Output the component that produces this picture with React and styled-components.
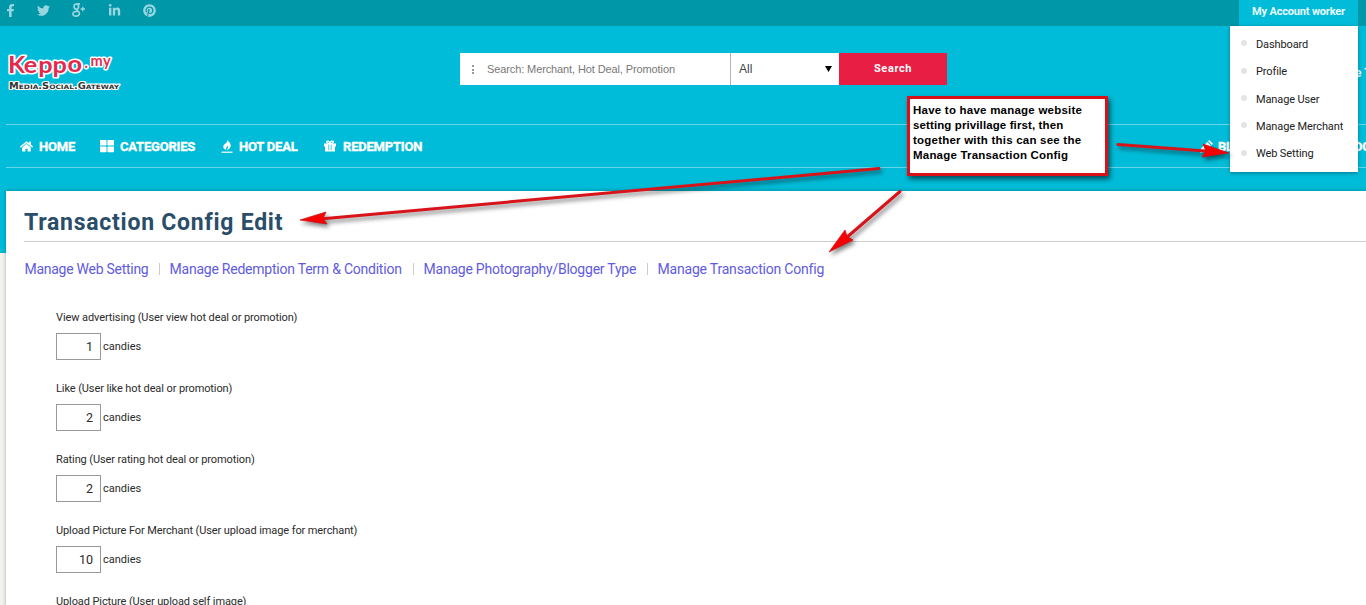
import React from 'react';
import styled, { createGlobalStyle } from 'styled-components';
import { FaFacebookF, FaTwitter, FaLinkedinIn, FaPinterest, FaHome, FaThLarge } from 'react-icons/fa';

const GlobalStyle = createGlobalStyle`
  *, *::before, *::after { box-sizing: border-box; }
  body { margin: 0; background: #f4f4ef; overflow: hidden; font-family: Roboto, "Liberation Sans", sans-serif; }
`;

const Page = styled.div`
  position: relative;
  width: 1366px;
  height: 605px;
  overflow: hidden;
  background: linear-gradient(#00bcd8 253px, #f4f4ef 253px);
`;

const TopBar = styled.div`
  height: 26px;
  background: #0097a9;
  display: flex;
  justify-content: space-between;
  padding-right: 8px;
`;

const SocialLinks = styled.div`
  display: flex;
  align-items: center;
  height: 20px;
  padding-left: 5px;
`;

const SocialLink = styled.span`
  display: flex;
  justify-content: center;
  width: ${(p) => p.$width}px;
  margin-right: ${(p) => p.$gap}px;
  color: #98d7e0;
  font-size: 13px;
`;

const Account = styled.div`
  position: relative;
  width: 119px;
  height: 26px;
  background: #00bcd8;
  color: #e9fbfd;
  font-size: 11px;
  font-weight: 700;
  line-height: 23px;
  letter-spacing: -0.17px;
  text-align: center;
  white-space: nowrap;
`;

const Dropdown = styled.ul`
  position: absolute;
  top: 26px;
  right: 0;
  z-index: 2;
  width: 128px;
  height: 146px;
  margin: 0;
  padding: 4.8px 0 0 11px;
  list-style: none;
  background: #fff;
  box-shadow: 0 1px 4px rgba(0, 0, 0, 0.35);
`;

const DropdownItem = styled.li`
  display: flex;
  align-items: center;
  height: 27.3px;
  color: #222;
  font-size: 11px;
  font-weight: 400;
  letter-spacing: -0.12px;
  text-align: left;
  &::before {
    content: '';
    width: 6px;
    height: 6px;
    margin: -2px 9px 0 0;
    border-radius: 50%;
    background: #e4e4e4;
  }
`;

const Header = styled.header`
  display: flex;
  align-items: flex-start;
  height: 98px;
  padding-left: 6px;
  > * { flex: none; }
`;

const LogoBox = styled.div`
  width: 454px;
  padding-top: 26px;
  svg { display: block; }
`;

const SearchForm = styled.div`
  display: flex;
  width: 487px;
  height: 32px;
  margin-top: 27px;
  background: #fff;
  font-family: "Liberation Sans", sans-serif;
`;

const SearchField = styled.div`
  display: flex;
  align-items: center;
  width: 271px;
  padding-left: 12px;
  border-right: 1px solid #b5b5b5;
  color: #777;
  font-size: 11px;
  letter-spacing: -0.11px;
`;

const Dots = styled.i`
  width: 2px;
  height: 9px;
  margin-right: 13px;
  background: repeating-linear-gradient(#999 0 2px, #fff 2px 3.5px);
`;

const SearchSelect = styled.div`
  display: flex;
  align-items: center;
  justify-content: space-between;
  width: 108px;
  padding: 0 7px 0 8px;
  color: #444;
  font-size: 12px;
`;

const SearchButton = styled.div`
  width: 108px;
  background: #e91e44;
  color: #fff;
  font: 700 11px/31px Roboto, sans-serif;
  letter-spacing: 0.6px;
  text-align: center;
`;

const HeaderTail = styled.div`
  margin: 40px 0 0 408px;
  color: #e9fbfd;
  font-size: 12px;
  font-weight: 700;
  white-space: nowrap;
`;

const Nav = styled.nav`
  display: flex;
  align-items: center;
  height: 44px;
  margin-left: 6px;
  padding-left: 14px;
  border-top: 1px solid #66d7e8;
  border-bottom: 1px solid #66d7e8;
`;

const NavItem = styled.div`
  display: flex;
  align-items: center;
  width: ${(p) => p.$width}px;
  flex: none;
  color: #fff;
  font-size: 13px;
  font-weight: 700;
  letter-spacing: -0.2px;
  -webkit-text-stroke: 0.35px #fff;
  white-space: nowrap;
  svg { flex: none; margin-right: ${(p) => p.$gap}px; }
`;

const Panel = styled.main`
  height: 460px;
  margin: 23px 0 0 6px;
  padding: 13px 0 0 18px;
  background: #fff;
  box-shadow: 0 0 4px rgba(0, 0, 0, 0.3);
`;

const Title = styled.h1`
  height: 38px;
  margin: 0;
  border-bottom: 1px solid #ccc;
  color: #2a4d69;
  font-size: 23px;
  font-weight: 700;
  line-height: 38px;
  letter-spacing: 0.75px;
`;

const Tabs = styled.div`
  display: flex;
  align-items: center;
  height: 54px;
  padding: 0 0 1px 0.5px;
  color: #5f5bdf;
  font-size: 14px;
  white-space: nowrap;
`;

const Tab = styled.span`
  width: ${(p) => p.$width}px;
  letter-spacing: ${(p) => p.$spacing}px;
`;

const Separator = styled.i`
  width: 1px;
  height: 12px;
  margin: 0 10px;
  background: #ccc;
`;

const Fields = styled.div`
  padding: 12px 0 0 32px;
`;

const Field = styled.div`
  height: 71px;
  color: #2b2b2b;
  font-size: 11px;
`;

const Label = styled.div`
  height: 25px;
  line-height: 20px;
  letter-spacing: -0.1px;
`;

const InputRow = styled.div`
  display: flex;
  align-items: center;
  gap: 2px;
`;

const NumberBox = styled.div`
  width: 45px;
  height: 27px;
  padding-right: 7px;
  border: 1px solid #999;
  font-size: 12.5px;
  line-height: 26px;
  text-align: right;
`;

const Note = styled.div`
  position: absolute;
  left: 907px;
  top: 96px;
  z-index: 3;
  width: 201px;
  height: 80px;
  padding: 4px 0 0 3px;
  border: 3px solid #dc1018;
  background: #fff;
  box-shadow: 2px 3px 5px rgba(0, 0, 0, 0.6);
  color: #000;
  font: 700 11.5px/15px "Liberation Sans", sans-serif;
  white-space: nowrap;
`;

const NoteLine = styled.div`
  letter-spacing: ${(p) => p.$spacing}px;
`;

const Arrows = styled.svg`
  position: absolute;
  inset: 0;
  z-index: 3;
  pointer-events: none;
  filter: drop-shadow(2px 3px 2px rgba(0, 0, 0, 0.5));
`;

const Logo = () => (
  <svg width="120" height="44" viewBox="0 0 120 44">
    <g fontFamily="Lato, sans-serif" fontWeight="700" fill="#e5294d" stroke="#fff" strokeWidth="3.2" paintOrder="stroke" strokeLinejoin="round">
      <text x="78.500 84.500 97" y="16 14 14" fontSize="14.500" strokeWidth="3">.my</text>
      <text transform="scale(1.15 1)" x="1.800 15.500 28 40.500 53.500" y="21 20.500 20.500 20.500 20" fontSize="22">Keppo</text>
    </g>
    <text x="3" y="37" fontFamily="DejaVu Sans, sans-serif" fontWeight="700" fontSize="8" fontVariant="small-caps" fill="#333" stroke="#fff" strokeWidth="2.2" paintOrder="stroke" strokeLinejoin="round" textLength="110" lengthAdjust="spacingAndGlyphs">Media.Social.Gateway</text>
  </svg>
);

const GooglePlus = () => (
  <svg width="14" height="14" viewBox="0 0 14 14" fill="none" stroke="currentColor" strokeWidth="1.6">
    <ellipse cx="4.3" cy="3.6" rx="2.3" ry="2.6" />
    <path d="M4.6 .9H8M5.700 5.800C4 7.200 5 7.400 6.200 8.400 8.600 10.600 7 13.100 4.100 13.100 1.600 13.100.800 11.900.900 10.600 1.100 8.800 3.200 8.200 5.500 8.200" />
    <path d="M10.800 3.800v4.400M8.600 6h4.400" strokeWidth="1.300" />
  </svg>
);

const Flame = () => (
  <svg width="12" height="13" viewBox="0 0 12 13" fill="#fff">
    <path d="M6.300 0C7.200 1.500 9.900 2.900 9.700 5.700 9.500 7.900 7.900 9.400 5.900 10 7 8.400 7.400 7 6.800 5.500 6.500 6.800 5.300 7.300 5.100 8.300 5 8.900 5.100 9.300 5.300 10 3.200 9.300 2.100 7.900 2.300 6.300 2.600 4 6.800 3 6.300 0Z" />
    <path d="M.5 11.600h11v1.200H.5z" />
  </svg>
);

const Gift = () => (
  <svg width="12" height="12" viewBox="0 0 12 12">
    <path d="M0 3.500h12v3H0zM1 6.500h10v5H1z" fill="#fff" />
    <path d="M6 3.300C5.500 1 3 .3 2.600 1.900 2.400 3 4 3.300 6 3.300 8 3.300 9.600 3 9.400 1.900 9 .3 6.500 1 6 3.300Z" fill="none" stroke="#fff" strokeWidth="1.300" />
    <path d="M4.500 4.600h.7v5.600h-.7zM6.800 4.600h.7v5.600h-.7z" fill="#00bcd8" />
  </svg>
);

const Pencil = () => (
  <svg width="13" height="13" viewBox="0 0 13 13" fill="#fff">
    <path d="M8 1.200 9.300 0 13 3.700 11.800 5ZM7.200 2 11 5.800 4.500 12 0 13 1 8.500Z" />
  </svg>
);

const accountLinks = ['Dashboard', 'Profile', 'Manage User', 'Manage Merchant', 'Web Setting'];

const fields = [
  ['View advertising (User view hot deal or promotion)', 1],
  ['Like (User like hot deal or promotion)', 2],
  ['Rating (User rating hot deal or promotion)', 2],
  ['Upload Picture For Merchant (User upload image for merchant)', 10],
  ['Upload Picture (User upload self image)', 10],
];

export default function App() {
  return (
    <Page>
      <GlobalStyle />
      <TopBar>
        <SocialLinks>
          <SocialLink $width={11} $gap={20}><FaFacebookF /></SocialLink>
          <SocialLink $width={14} $gap={22}><FaTwitter /></SocialLink>
          <SocialLink $width={14} $gap={22}><GooglePlus /></SocialLink>
          <SocialLink $width={13} $gap={22}><FaLinkedinIn /></SocialLink>
          <SocialLink $width={13} $gap={0}><FaPinterest /></SocialLink>
        </SocialLinks>
        <Account>
          My Account worker
          <Dropdown>
            {accountLinks.map((t) => <DropdownItem key={t}>{t}</DropdownItem>)}
          </Dropdown>
        </Account>
      </TopBar>
      <Header>
        <LogoBox><Logo /></LogoBox>
        <SearchForm>
          <SearchField><Dots />Search: Merchant, Hot Deal, Promotion</SearchField>
          <SearchSelect>
            All
            <svg width="7" height="6" viewBox="0 0 7 6"><path d="M0 0h7L3.500 6z" /></svg>
          </SearchSelect>
          <SearchButton>Search</SearchButton>
        </SearchForm>
        <HeaderTail>e T</HeaderTail>
      </Header>
      <Nav>
        <NavItem $width={80} $gap={6}><FaHome size={13} />HOME</NavItem>
        <NavItem $width={121} $gap={6}><FaThLarge size={14} />CATEGORIES</NavItem>
        <NavItem $width={103} $gap={6}><Flame />HOT DEAL</NavItem>
        <NavItem $width={876} $gap={7}><Gift />REDEMPTION</NavItem>
        <NavItem $width={154} $gap={5}><Pencil />BL</NavItem>
        <NavItem $width={20} $gap={0}>DO</NavItem>
      </Nav>
      <Panel>
        <Title>Transaction Config Edit</Title>
        <Tabs>
          <Tab $width={124} $spacing={-0.27}>Manage Web Setting</Tab><Separator />
          <Tab $width={233} $spacing={-0.23}>Manage Redemption Term &amp; Condition</Tab><Separator />
          <Tab $width={213} $spacing={-0.23}>Manage Photography/Blogger Type</Tab><Separator />
          <Tab $width={170} $spacing={-0.2}>Manage Transaction Config</Tab>
        </Tabs>
        <Fields>
          {fields.map(([label, value]) => (
            <Field key={label}>
              <Label>{label}</Label>
              <InputRow><NumberBox>{value}</NumberBox>candies</InputRow>
            </Field>
          ))}
        </Fields>
      </Panel>
      <Note>
        <NoteLine $spacing={0.23}>Have to have manage website</NoteLine>
        <NoteLine $spacing={0.11}>setting privillage first, then</NoteLine>
        <NoteLine $spacing={0.22}>together with this can see the</NoteLine>
        <NoteLine $spacing={0.2}>Manage Transaction Config</NoteLine>
      </Note>
      <Arrows width="1366" height="605" viewBox="0 0 1366 605">
        <g stroke="#d8141a" strokeWidth="3" strokeLinecap="round">
          <path d="M879 168.500 320 219" />
          <path d="M900 191.500 846 238" />
          <path d="M1118 144.500 1205 151" />
        </g>
        <g fill="#f80000" stroke="#c81010" strokeWidth=".7">
          <path d="M300 220 326 212 323 218.500 327 224Z" />
          <path d="M829 252 845 230 847 236.500 853 240Z" />
          <path d="M1229 153 1203 144 1206 151 1202 157Z" />
        </g>
      </Arrows>
    </Page>
  );
}
